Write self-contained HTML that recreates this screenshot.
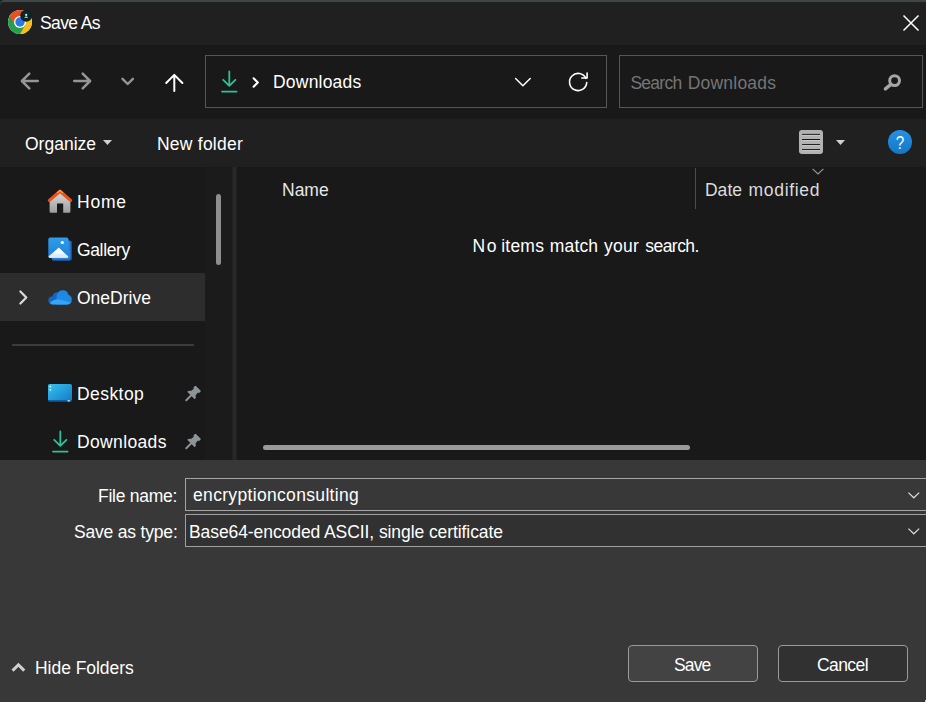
<!DOCTYPE html>
<html lang="en">
<head>
<meta charset="utf-8">
<title>Save As</title>
<style>
html,body{margin:0;padding:0;background:#191919;}
body{width:926px;height:702px;overflow:hidden;position:relative;font-family:"Liberation Sans",sans-serif;font-size:17.5px;color:#fff;}
.abs{position:absolute;}
.t{position:absolute;white-space:nowrap;line-height:20px;height:20px;color:#fff;margin-top:1px;}
svg{position:absolute;overflow:visible;}
#frame{left:0;top:0;width:926px;height:702px;background:#3e4646;}
#titlebar{left:0;top:2px;width:926px;height:43px;background:#202020;border-top-left-radius:3.5px;}
#nav{left:0;top:45px;width:926px;height:74px;background:#191919;}
#toolbar{left:0;top:119px;width:926px;height:48px;background:#202020;}
#content{left:0;top:167px;width:926px;height:293px;background:#191919;}
#bottom{left:0;top:460px;width:926px;height:242px;background:#383838;}
.box{position:absolute;box-sizing:border-box;border:1px solid #565656;background:#191919;}
.btn{position:absolute;box-sizing:border-box;border:1px solid #9a9a9a;border-radius:4px;}
</style>
</head>
<body>
<div id="frame" class="abs"></div>
<div id="titlebar" class="abs"></div>
<div id="nav" class="abs"></div>
<div id="toolbar" class="abs"></div>
<div id="content" class="abs"></div>
<div id="bottom" class="abs"></div>

<!-- TITLE BAR -->
<svg style="left:0;top:0" width="5" height="5" viewBox="0 0 5 5"><path d="M0 0 H3.6 Q0.8 0.6 0 3.2 Z" fill="#0d2a30"/></svg>
<svg id="chrome" style="left:8px;top:10px" width="24" height="24" viewBox="-12 -12 24 24">
  <circle r="12" fill="#fff"/>
  <path d="M0 0 L-10.39 -6 A12 12 0 0 1 10.39 -6 Z" fill="#e8501f"/>
  <path d="M0 0 L10.39 -6 A12 12 0 0 1 0 12 Z" fill="#f9bc15"/>
  <path d="M0 0 L0 12 A12 12 0 0 1 -10.39 -6 Z" fill="#249f4b"/>
  <path d="M-10.39 -6 L-5.2 3 L0 -6 Z" fill="#e8501f"/>
  <path d="M10.39 -6 L0 -6 L5.2 3 Z" fill="#f9bc15"/>
  <path d="M0 12 L5.2 3 L-5.2 3 Z" fill="#249f4b"/>
  <circle r="6" fill="#fff"/>
  <circle r="4.7" fill="#2a78e6"/>
  <circle cx="6.2" cy="-6.2" r="6" fill="#0c2627"/>
  <circle cx="6.2" cy="-7.1" r="1.1" fill="#e8e8e8"/>
  <path d="M4.2 -4.2 Q6.2 -6.6 8.2 -4.2 Z" fill="#e8e8e8"/>
</svg>
<span class="t" style="left:40px;top:12px;letter-spacing:-0.6px">Save As</span>
<svg style="left:902.6px;top:15px" width="16" height="16" viewBox="0 0 16 16"><path d="M0.5 0.5 L15.5 15.5 M15.5 0.5 L0.5 15.5" stroke="#fff" stroke-width="1.5" fill="none"/></svg>

<!-- NAV BAR -->
<svg style="left:20px;top:72px" width="19" height="18" viewBox="0 0 19 18"><path d="M17.8 9 H2 M9.3 1.6 L1.9 9 L9.3 16.4" stroke="#959595" stroke-width="2.5" fill="none" stroke-linecap="round" stroke-linejoin="round"/></svg>
<svg style="left:73px;top:72px" width="19" height="18" viewBox="0 0 19 18"><path d="M1.2 9 H17 M9.7 1.6 L17.1 9 L9.7 16.4" stroke="#959595" stroke-width="2.5" fill="none" stroke-linecap="round" stroke-linejoin="round"/></svg>
<svg style="left:121px;top:77px" width="14" height="9" viewBox="0 0 14 9"><path d="M1.5 1.8 L6.7 7 L11.9 1.8" stroke="#959595" stroke-width="2.4" fill="none" stroke-linecap="round" stroke-linejoin="round"/></svg>
<svg style="left:165px;top:73px" width="19" height="19" viewBox="0 0 19 19"><path d="M9.3 18 V2 M1.2 10 L9.3 1.9 L17.4 10" stroke="#fff" stroke-width="2" fill="none" stroke-linecap="round" stroke-linejoin="round"/></svg>

<div class="box" style="left:205px;top:55px;width:402px;height:53px"></div>
<svg style="left:221px;top:70px" width="17" height="23" viewBox="0 0 17 23"><path d="M8.3 1.4 V15.5 M2.2 9.8 L8.3 15.9 L14.4 9.8 M1 21.6 H15.6" stroke="#2cc19a" stroke-width="1.8" fill="none" stroke-linecap="round" stroke-linejoin="round"/></svg>
<svg style="left:252px;top:77px" width="8" height="11" viewBox="0 0 8 11"><path d="M1.6 1.3 L5.8 5.5 L1.6 9.7" stroke="#fff" stroke-width="2.1" fill="none" stroke-linecap="round" stroke-linejoin="round"/></svg>
<span class="t" style="left:273px;top:71px;letter-spacing:0.21px">Downloads</span>
<svg style="left:514px;top:77px" width="18" height="11" viewBox="0 0 18 11"><path d="M1.6 1.5 L8.9 8.8 L16.2 1.5" stroke="#fff" stroke-width="1.5" fill="none" stroke-linecap="round" stroke-linejoin="round"/></svg>
<svg style="left:568px;top:72px" width="20" height="20" viewBox="0 0 20 20"><path d="M17.9 6.3 A8.6 8.6 0 1 0 18.7 10.6" stroke="#fff" stroke-width="1.6" fill="none" stroke-linecap="round"/><path d="M19.1 1 V6 H13.8" stroke="#fff" stroke-width="1.6" fill="none" stroke-linecap="round" stroke-linejoin="round"/></svg>

<div class="box" style="left:619px;top:55px;width:304px;height:53px"></div>
<span class="t" style="left:630.4px;top:72px;color:#757575;letter-spacing:-0.74px">Search</span>
<span class="t" style="left:687.7px;top:72px;color:#757575;letter-spacing:0.22px">Downloads</span>
<svg style="left:883px;top:74px" width="19" height="17" viewBox="0 0 19 17"><circle cx="11.6" cy="6.6" r="4.9" stroke="#a6a6a6" stroke-width="3" fill="none"/><path d="M7.6 10.6 L2.4 14.9" stroke="#a6a6a6" stroke-width="3.4" stroke-linecap="round"/></svg>

<!-- TOOLBAR -->
<span class="t" style="left:25px;top:133px">Organize</span>
<svg style="left:103px;top:140px" width="9" height="5" viewBox="0 0 9 5"><path d="M0 0 H9 L4.5 5 Z" fill="#d0d0d0"/></svg>
<span class="t" style="left:157px;top:133px;letter-spacing:0.23px">New folder</span>
<svg style="left:799px;top:130px" width="24" height="24" viewBox="0 0 24 24"><rect x="0" y="0" width="24" height="24" rx="3" fill="#b2b2b2"/><path d="M3 4.4 H21 M3 9.5 H21 M3 14.6 H21 M3 19.6 H21" stroke="#141414" stroke-width="1"/><path d="M3 5.4 H21 M3 10.5 H21 M3 15.6 H21 M3 20.6 H21" stroke="#cfcfcf" stroke-width="0.8"/></svg>
<svg style="left:836px;top:140px" width="9" height="5" viewBox="0 0 9 5"><path d="M0 0 H9 L4.5 5 Z" fill="#d0d0d0"/></svg>
<svg style="left:888px;top:130px" width="24" height="24" viewBox="0 0 24 24"><defs><linearGradient id="hg" x1="0" y1="0" x2="0" y2="1"><stop offset="0" stop-color="#2592e4"/><stop offset="1" stop-color="#1477c6"/></linearGradient></defs><circle cx="12" cy="12" r="12" fill="url(#hg)"/><text x="0" y="0" transform="translate(11.9 18.8) scale(0.8 1)" text-anchor="middle" font-family="Liberation Sans, sans-serif" font-size="19" fill="#fff">?</text></svg>

<!-- SIDEBAR -->
<div class="abs" style="left:205px;top:167px;width:27px;height:293px;background:#1b1b1b"></div>
<div class="abs" style="left:232px;top:167px;width:5px;height:293px;background:linear-gradient(90deg,#1f1f1f,#292b2b 45%,#292b2b 55%,#1f1f1f)"></div>
<div class="abs" style="left:216px;top:194px;width:5px;height:71px;border-radius:3px;background:#8e8e8e"></div>
<div class="abs" style="left:0;top:273px;width:205px;height:48px;background:#2d2d2d"></div>
<div class="abs" style="left:12px;top:344px;width:182px;height:2px;background:#3c3c3c"></div>

<!-- Home -->
<svg style="left:48px;top:189px" width="24" height="24" viewBox="0 0 24 24">
  <defs><linearGradient id="hb" x1="0" y1="0" x2="0" y2="1"><stop offset="0" stop-color="#dcdcdc"/><stop offset="1" stop-color="#9c9c9c"/></linearGradient></defs>
  <path d="M1.6 11 L12 2.4 L22.4 11 V22.6 Q22.4 23.8 21.2 23.8 H15.2 V14.4 H9 V23.8 H2.8 Q1.6 23.8 1.6 22.6 Z" fill="url(#hb)"/>
  <path d="M1.4 11.4 L12 2.2 L22.6 11.4" stroke="#e9531b" stroke-width="3.2" fill="none" stroke-linecap="round" stroke-linejoin="round"/>
  <path d="M9.4 3.6 L12 1.5 L14.6 3.6" stroke="#f6a93c" stroke-width="1.2" fill="none" stroke-linecap="round" stroke-linejoin="round"/>
</svg>
<span class="t" style="left:77px;top:191px;letter-spacing:0.8px">Home</span>
<!-- Gallery -->
<svg style="left:48px;top:237px" width="24" height="24" viewBox="0 0 24 24">
  <defs><linearGradient id="gg" x1="0" y1="0" x2="0" y2="1"><stop offset="0" stop-color="#2e9fea"/><stop offset="1" stop-color="#1f7ed8"/></linearGradient></defs>
  <rect x="3.6" y="3.4" width="20.2" height="20.4" rx="2.2" fill="#1d5db2"/>
  <rect x="3.6" y="3.4" width="18.8" height="19" rx="1.8" fill="#2f7fd4"/>
  <rect x="0.3" y="0.4" width="20.2" height="20.4" rx="2" fill="url(#gg)"/>
  <path d="M0.6 19.6 L10.8 10.6 L20.2 19.6 Q20.2 20.8 19 20.8 H1.8 Q0.6 20.8 0.6 19.6 Z" fill="#f7fafd"/>
  <path d="M0.6 19.6 L4 16.6 L17.4 17 L20.2 19.6 Q20.2 20.8 19 20.8 H1.8 Q0.6 20.8 0.6 19.6Z" fill="#d4e6f6" opacity="0.75"/>
  <circle cx="14.3" cy="5.5" r="1.6" fill="#fff"/>
</svg>
<span class="t" style="left:77px;top:239px;letter-spacing:-0.36px">Gallery</span>
<!-- OneDrive -->
<svg style="left:19px;top:290px" width="9" height="15" viewBox="0 0 9 15"><path d="M1.4 1.5 L7.3 7.5 L1.4 13.5" stroke="#d9d9d9" stroke-width="2.3" fill="none" stroke-linecap="round" stroke-linejoin="round"/></svg>
<svg style="left:48px;top:289px" width="24" height="16" viewBox="0 0 24 16">
  <path d="M5 15.5 Q0.3 15.5 0.3 11.4 Q0.3 7.6 4.3 7.2 Q5.4 3.2 9.6 3.2 Q11.8 3.2 13.2 4.8 L17 15.5 Z" fill="#1565c0"/>
  <path d="M8.5 6.5 Q10 1.2 15 1.2 Q19.6 1.2 20.6 6 Q23.8 6.6 23.8 10.4 Q23.8 15.5 19 15.5 H9 Z" fill="#1e88e5"/>
  <path d="M2 14 Q6 9.5 11.5 10.4 L22.8 13.4 Q21.6 15.5 19 15.5 H5 Q3 15.5 2 14Z" fill="#35a5f5"/>
</svg>
<span class="t" style="left:77px;top:287px;letter-spacing:0px">OneDrive</span>
<!-- Desktop -->
<svg style="left:48px;top:384px" width="24" height="18" viewBox="0 0 24 18"><defs><linearGradient id="dg" x1="0" y1="0" x2="1" y2="1"><stop offset="0" stop-color="#35c4ee"/><stop offset="1" stop-color="#1479c6"/></linearGradient></defs><rect x="0" y="0" width="24" height="17" rx="1.8" fill="url(#dg)"/><rect x="0.3" y="16" width="23.4" height="1.8" rx="0.8" fill="#0d5ea5"/><rect x="1.6" y="1.8" width="1.6" height="1.6" fill="#dff4fb"/><rect x="1.6" y="5" width="1.6" height="1.6" fill="#dff4fb"/><rect x="19.5" y="16.2" width="2.6" height="1.2" fill="#d8ecf8"/></svg>
<span class="t" style="left:77px;top:383px;letter-spacing:0.43px">Desktop</span>
<svg class="pin" style="left:184px;top:385px" width="17" height="17" viewBox="0 0 17 17"><g transform="translate(8.7 8.8) rotate(45) scale(0.95)"><path d="M-3.4 -8.2 H3.4 Q4.2 -8.2 4.2 -7.4 V-5.6 Q4.2 -4.9 3.4 -4.9 H3 L3.2 -1.2 Q5.6 0.2 5.6 2.6 H-5.6 Q-5.6 0.2 -3.2 -1.2 L-3 -4.9 H-3.4 Q-4.2 -4.9 -4.2 -5.6 V-7.4 Q-4.2 -8.2 -3.4 -8.2 Z" fill="#8d939a"/><path d="M0 2.6 V9.6" stroke="#8d939a" stroke-width="2" stroke-linecap="round"/></g></svg>
<!-- Downloads -->
<svg style="left:52px;top:430px" width="17" height="23" viewBox="0 0 17 23"><path d="M8.3 1.4 V15.5 M2.2 9.8 L8.3 15.9 L14.4 9.8 M1 21.6 H15.6" stroke="#2cc19a" stroke-width="1.8" fill="none" stroke-linecap="round" stroke-linejoin="round"/></svg>
<span class="t" style="left:77px;top:431px;letter-spacing:0.35px">Downloads</span>
<svg class="pin" style="left:184px;top:433px" width="17" height="17" viewBox="0 0 17 17"><g transform="translate(8.7 8.8) rotate(45) scale(0.95)"><path d="M-3.4 -8.2 H3.4 Q4.2 -8.2 4.2 -7.4 V-5.6 Q4.2 -4.9 3.4 -4.9 H3 L3.2 -1.2 Q5.6 0.2 5.6 2.6 H-5.6 Q-5.6 0.2 -3.2 -1.2 L-3 -4.9 H-3.4 Q-4.2 -4.9 -4.2 -5.6 V-7.4 Q-4.2 -8.2 -3.4 -8.2 Z" fill="#8d939a"/><path d="M0 2.6 V9.6" stroke="#8d939a" stroke-width="2" stroke-linecap="round"/></g></svg>

<!-- FILE LIST -->
<span class="t" style="left:282px;top:179px;color:#e6e6e6">Name</span>
<div class="abs" style="left:695px;top:168px;width:1px;height:41px;background:#4d4d4d"></div>
<svg style="left:812px;top:168px" width="12" height="7" viewBox="0 0 12 7"><path d="M0.6 0.8 L6 6 L11.4 0.8" stroke="#9a9a9a" stroke-width="1.1" fill="none"/></svg>
<span class="t" style="left:704.9px;top:179px;color:#dcdcdc;letter-spacing:0.06px">Date</span>
<span class="t" style="left:748.6px;top:179px;color:#dcdcdc;letter-spacing:0.67px">modified</span>
<span class="t" style="left:472.5px;top:235px;letter-spacing:1.66px">No</span>
<span class="t" style="left:501.2px;top:235px;letter-spacing:0.23px">items</span>
<span class="t" style="left:549.7px;top:235px;letter-spacing:0.19px">match</span>
<span class="t" style="left:604.1px;top:235px;letter-spacing:0.19px">your</span>
<span class="t" style="left:645.3px;top:235px;letter-spacing:-0.55px">search.</span>
<div class="abs" style="left:263px;top:445px;width:427px;height:5px;border-radius:3px;background:#9a9a9a"></div>

<!-- BOTTOM PANEL -->
<span class="t" style="left:98px;top:485px;letter-spacing:-0.27px">File name:</span>
<div class="abs" style="left:185px;top:478px;width:760px;height:33px;box-sizing:border-box;border:1px solid #a4a4a4;background:#383838"></div>
<span class="t" style="left:193px;top:484px;letter-spacing:0.33px">encryptionconsulting</span>
<svg style="left:908px;top:492px" width="12" height="7" viewBox="0 0 12 7"><path d="M0.4 0.6 L5.8 5.8 L11.2 0.6" stroke="#dadada" stroke-width="1.2" fill="none"/></svg>
<span class="t" style="left:74px;top:521px;letter-spacing:-0.19px">Save as type:</span>
<div class="abs" style="left:185px;top:514px;width:760px;height:33px;box-sizing:border-box;border:1px solid #a0a0a0;background:#313131"></div>
<span class="t" style="left:189px;top:521px;letter-spacing:-0.08px">Base64-encoded ASCII, single certificate</span>
<svg style="left:908px;top:528px" width="12" height="7" viewBox="0 0 12 7"><path d="M0.4 0.6 L5.8 5.8 L11.2 0.6" stroke="#dadada" stroke-width="1.2" fill="none"/></svg>

<svg style="left:11px;top:662px" width="15" height="10" viewBox="0 0 15 10"><path d="M2.6 7.6 L7.4 2.8 L12.2 7.6" stroke="#d0d0d0" stroke-width="3" fill="none" stroke-linecap="square" stroke-linejoin="miter"/></svg>
<span class="t" style="left:35px;top:657px;letter-spacing:-0.04px">Hide Folders</span>

<div class="btn" style="left:628px;top:645px;width:130px;height:37px;background:#434343"></div>
<span class="t" style="left:674px;top:654px;letter-spacing:-0.87px">Save</span>
<div class="btn" style="left:778px;top:645px;width:130px;height:37px;background:#313131"></div>
<span class="t" style="left:817px;top:654px;letter-spacing:-0.58px">Cancel</span>
<div class="abs" style="left:925px;top:700px;width:1px;height:2px;background:#cfcfcf"></div>
</body>
</html>
